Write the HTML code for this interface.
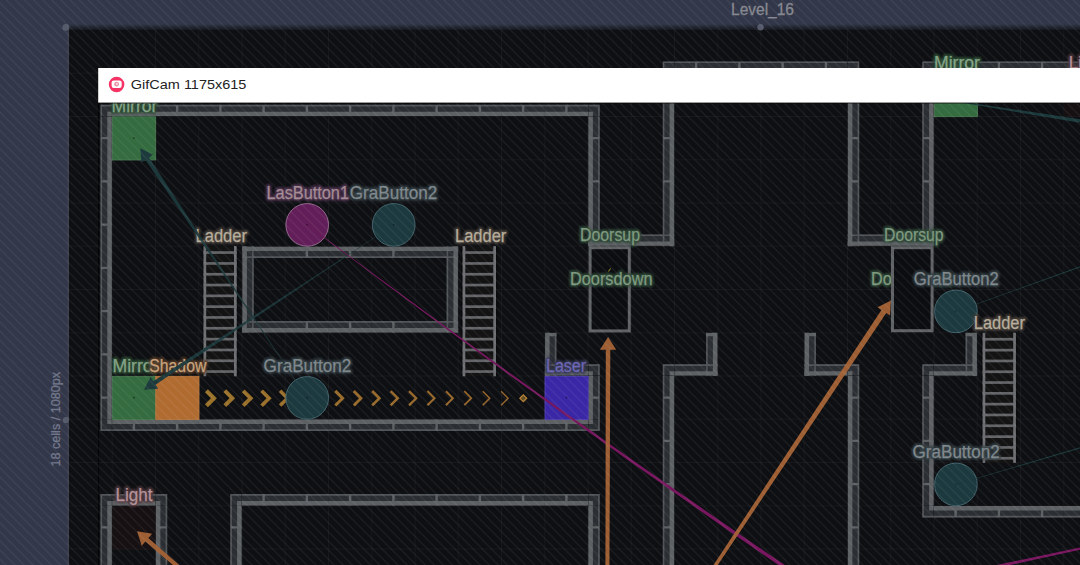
<!DOCTYPE html>
<html lang="en"><head><meta charset="utf-8"><title>Level_16</title>
<style>
html,body{margin:0;padding:0;background:#323749;overflow:hidden}
body{width:1080px;height:565px}
svg{display:block;font-family:"Liberation Sans",sans-serif}
</style></head><body>
<svg width="1080" height="565" viewBox="0 0 1080 565">
<defs>
<pattern id="stripes" width="9.12" height="9.12" patternUnits="userSpaceOnUse" patternTransform="translate(6.3 0)">
<path d="M-1 -1L10.12 10.12M-1 8.12L1 10.12M8.12 -1L10.12 1" stroke="#fff" stroke-opacity="0.082" stroke-width="0.92" fill="none"/>
</pattern>
<linearGradient id="tsh" x1="0" y1="0" x2="0" y2="1"><stop offset="0" stop-color="#000" stop-opacity="0"/><stop offset="1" stop-color="#000" stop-opacity="0.6"/></linearGradient>
<filter id="halo" x="-20%" y="-40%" width="140%" height="180%"><feGaussianBlur stdDeviation="0.8"/></filter>
</defs>
<rect width="1080" height="565" fill="#323749"/>
<rect x="68.0" y="24.0" width="1080" height="6" fill="url(#tsh)"/>
<rect x="67.4" y="29.0" width="2" height="565" fill="#3c404c"/>
<rect x="69.0" y="30.0" width="1080" height="565" fill="#0e0f12"/>
<path d="M112.2 30.0V565M155.5 30.0V565M198.8 30.0V565M242.0 30.0V565M285.2 30.0V565M328.5 30.0V565M371.8 30.0V565M415.0 30.0V565M458.2 30.0V565M501.5 30.0V565M544.8 30.0V565M588.0 30.0V565M631.2 30.0V565M674.5 30.0V565M717.8 30.0V565M761.0 30.0V565M804.2 30.0V565M847.5 30.0V565M890.8 30.0V565M934.0 30.0V565M977.2 30.0V565M1020.5 30.0V565M1063.8 30.0V565M69.0 73.2H1080M69.0 116.5H1080M69.0 159.8H1080M69.0 203.0H1080M69.0 246.2H1080M69.0 289.5H1080M69.0 332.8H1080M69.0 376.0H1080M69.0 419.2H1080M69.0 462.5H1080M69.0 505.8H1080M69.0 549.0H1080" stroke="#16181c" stroke-width="1" fill="none"/>
<g id="walls" shape-rendering="auto">
<path d="M662.8 61.5h11.3v11.3h-11.3zM674.5 61.5h43.2v11.3h-43.2zM717.8 61.5h43.2v11.3h-43.2zM761.0 61.5h43.2v11.3h-43.2zM804.2 61.5h43.2v11.3h-43.2zM847.9 61.5h11.3v11.3h-11.3zM922.3 61.5h11.3v11.3h-11.3zM934.0 61.5h43.2v11.3h-43.2zM977.2 61.5h43.2v11.3h-43.2zM1020.5 61.5h43.2v11.3h-43.2zM1063.8 61.5h43.2v11.3h-43.2zM100.5 104.8h11.3v11.3h-11.3zM112.2 104.8h43.2v11.3h-43.2zM155.5 104.8h43.2v11.3h-43.2zM198.8 104.8h43.2v11.3h-43.2zM242.0 104.8h43.2v11.3h-43.2zM285.2 104.8h43.2v11.3h-43.2zM328.5 104.8h43.2v11.3h-43.2zM371.8 104.8h43.2v11.3h-43.2zM415.0 104.8h43.2v11.3h-43.2zM458.2 104.8h43.2v11.3h-43.2zM501.5 104.8h43.2v11.3h-43.2zM544.8 104.8h43.2v11.3h-43.2zM588.4 104.8h11.3v11.3h-11.3zM662.8 73.2h11.3v43.2h-11.3zM847.9 73.2h11.3v43.2h-11.3zM922.3 73.2h11.3v43.2h-11.3zM100.5 116.5h11.3v43.2h-11.3zM588.4 116.5h11.3v43.2h-11.3zM662.8 116.5h11.3v43.2h-11.3zM847.9 116.5h11.3v43.2h-11.3zM922.3 116.5h11.3v43.2h-11.3zM100.5 159.8h11.3v43.2h-11.3zM588.4 159.8h11.3v43.2h-11.3zM662.8 159.8h11.3v43.2h-11.3zM847.9 159.8h11.3v43.2h-11.3zM922.3 159.8h11.3v43.2h-11.3zM100.5 203.0h11.3v43.2h-11.3zM588.0 234.5h43.2v11.3h-43.2zM588.4 203.0h11.3v43.2h-11.3zM631.2 234.5h43.2v11.3h-43.2zM662.8 203.0h11.3v43.2h-11.3zM847.5 234.5h43.2v11.3h-43.2zM847.9 203.0h11.3v43.2h-11.3zM890.8 234.5h43.2v11.3h-43.2zM922.3 203.0h11.3v43.2h-11.3zM100.5 246.2h11.3v43.2h-11.3zM242.0 246.7h43.2v11.3h-43.2zM242.4 246.2h11.3v43.2h-11.3zM285.2 246.7h43.2v11.3h-43.2zM328.5 246.7h43.2v11.3h-43.2zM371.8 246.7h43.2v11.3h-43.2zM415.0 246.7h43.2v11.3h-43.2zM446.6 246.2h11.3v43.2h-11.3zM100.5 289.5h11.3v43.2h-11.3zM242.0 321.1h43.2v11.3h-43.2zM242.4 289.5h11.3v43.2h-11.3zM285.2 321.1h43.2v11.3h-43.2zM328.5 321.1h43.2v11.3h-43.2zM371.8 321.1h43.2v11.3h-43.2zM415.0 321.1h43.2v11.3h-43.2zM446.6 289.5h11.3v43.2h-11.3zM100.5 332.8h11.3v43.2h-11.3zM544.8 364.3h43.2v11.3h-43.2zM545.1 332.8h11.3v43.2h-11.3zM588.4 364.3h11.3v11.3h-11.3zM662.8 364.3h11.3v11.3h-11.3zM674.5 364.3h43.2v11.3h-43.2zM706.1 332.8h11.3v43.2h-11.3zM804.2 364.3h43.2v11.3h-43.2zM804.6 332.8h11.3v43.2h-11.3zM847.9 364.3h11.3v11.3h-11.3zM922.3 364.3h11.3v11.3h-11.3zM934.0 364.3h43.2v11.3h-43.2zM965.6 332.8h11.3v43.2h-11.3zM100.5 376.0h11.3v43.2h-11.3zM588.4 376.0h11.3v43.2h-11.3zM662.8 376.0h11.3v43.2h-11.3zM847.9 376.0h11.3v43.2h-11.3zM922.3 376.0h11.3v43.2h-11.3zM100.5 419.6h11.3v11.3h-11.3zM112.2 419.6h43.2v11.3h-43.2zM155.5 419.6h43.2v11.3h-43.2zM198.8 419.6h43.2v11.3h-43.2zM242.0 419.6h43.2v11.3h-43.2zM285.2 419.6h43.2v11.3h-43.2zM328.5 419.6h43.2v11.3h-43.2zM371.8 419.6h43.2v11.3h-43.2zM415.0 419.6h43.2v11.3h-43.2zM458.2 419.6h43.2v11.3h-43.2zM501.5 419.6h43.2v11.3h-43.2zM544.8 419.6h43.2v11.3h-43.2zM588.4 419.6h11.3v11.3h-11.3zM662.8 419.2h11.3v43.2h-11.3zM847.9 419.2h11.3v43.2h-11.3zM922.3 419.2h11.3v43.2h-11.3zM100.5 494.1h11.3v11.3h-11.3zM112.2 494.1h43.2v11.3h-43.2zM155.9 494.1h11.3v11.3h-11.3zM230.3 494.1h11.3v11.3h-11.3zM242.0 494.1h43.2v11.3h-43.2zM285.2 494.1h43.2v11.3h-43.2zM328.5 494.1h43.2v11.3h-43.2zM371.8 494.1h43.2v11.3h-43.2zM415.0 494.1h43.2v11.3h-43.2zM458.2 494.1h43.2v11.3h-43.2zM501.5 494.1h43.2v11.3h-43.2zM544.8 494.1h43.2v11.3h-43.2zM588.4 494.1h11.3v11.3h-11.3zM662.8 462.5h11.3v43.2h-11.3zM847.9 462.5h11.3v43.2h-11.3zM922.3 462.5h11.3v43.2h-11.3zM100.5 505.8h11.3v43.2h-11.3zM155.9 505.8h11.3v43.2h-11.3zM230.3 505.8h11.3v43.2h-11.3zM588.4 505.8h11.3v43.2h-11.3zM662.8 505.8h11.3v43.2h-11.3zM847.9 505.8h11.3v43.2h-11.3zM922.3 506.1h11.3v11.3h-11.3zM934.0 506.1h43.2v11.3h-43.2zM977.2 506.1h43.2v11.3h-43.2zM1020.5 506.1h43.2v11.3h-43.2zM1063.8 506.1h43.2v11.3h-43.2zM100.5 549.0h11.3v43.2h-11.3zM155.9 549.0h11.3v43.2h-11.3zM230.3 549.0h11.3v43.2h-11.3zM588.4 549.0h11.3v43.2h-11.3zM662.8 549.0h11.3v43.2h-11.3zM847.9 549.0h11.3v43.2h-11.3zM100.5 592.2h11.3v43.2h-11.3zM155.9 592.2h11.3v43.2h-11.3zM230.3 592.2h11.3v43.2h-11.3zM588.4 592.2h11.3v43.2h-11.3zM662.8 592.2h11.3v43.2h-11.3zM847.9 592.2h11.3v43.2h-11.3z" fill="#2b2e32"/>
<path d="M662.8 61.5h1.6v11.3h-1.6zM662.8 61.5h11.3v1.6h-11.3zM674.5 61.5h43.2v1.6h-43.2zM717.8 61.5h43.2v1.6h-43.2zM761.0 61.5h43.2v1.6h-43.2zM804.2 61.5h43.2v1.6h-43.2zM857.6 61.5h1.6v11.3h-1.6zM847.9 61.5h11.3v1.6h-11.3zM922.3 61.5h1.6v11.3h-1.6zM922.3 61.5h11.3v1.6h-11.3zM934.0 61.5h43.2v1.6h-43.2zM977.2 61.5h43.2v1.6h-43.2zM1020.5 61.5h43.2v1.6h-43.2zM1063.8 61.5h43.2v1.6h-43.2zM100.5 104.8h1.6v11.3h-1.6zM100.5 104.8h11.3v1.6h-11.3zM112.2 104.8h43.2v1.6h-43.2zM155.5 104.8h43.2v1.6h-43.2zM198.8 104.8h43.2v1.6h-43.2zM242.0 104.8h43.2v1.6h-43.2zM285.2 104.8h43.2v1.6h-43.2zM328.5 104.8h43.2v1.6h-43.2zM371.8 104.8h43.2v1.6h-43.2zM415.0 104.8h43.2v1.6h-43.2zM458.2 104.8h43.2v1.6h-43.2zM501.5 104.8h43.2v1.6h-43.2zM544.8 104.8h43.2v1.6h-43.2zM598.1 104.8h1.6v11.3h-1.6zM588.4 104.8h11.3v1.6h-11.3zM662.8 73.2h1.6v43.2h-1.6zM857.6 73.2h1.6v43.2h-1.6zM922.3 73.2h1.6v43.2h-1.6zM100.5 116.5h1.6v43.2h-1.6zM598.1 116.5h1.6v43.2h-1.6zM662.8 116.5h1.6v43.2h-1.6zM857.6 116.5h1.6v43.2h-1.6zM922.3 116.5h1.6v43.2h-1.6zM100.5 159.8h1.6v43.2h-1.6zM598.1 159.8h1.6v43.2h-1.6zM662.8 159.8h1.6v43.2h-1.6zM857.6 159.8h1.6v43.2h-1.6zM922.3 159.8h1.6v43.2h-1.6zM100.5 203.0h1.6v43.2h-1.6zM588.0 234.5h43.2v1.6h-43.2zM598.1 203.0h1.6v43.2h-1.6zM631.2 234.5h43.2v1.6h-43.2zM662.8 203.0h1.6v43.2h-1.6zM847.5 234.5h43.2v1.6h-43.2zM857.6 203.0h1.6v43.2h-1.6zM890.8 234.5h43.2v1.6h-43.2zM922.3 203.0h1.6v43.2h-1.6zM100.5 246.2h1.6v43.2h-1.6zM242.0 256.3h43.2v1.6h-43.2zM252.1 246.2h1.6v43.2h-1.6zM285.2 256.3h43.2v1.6h-43.2zM328.5 256.3h43.2v1.6h-43.2zM371.8 256.3h43.2v1.6h-43.2zM415.0 256.3h43.2v1.6h-43.2zM446.6 246.2h1.6v43.2h-1.6zM100.5 289.5h1.6v43.2h-1.6zM242.0 321.1h43.2v1.6h-43.2zM252.1 289.5h1.6v43.2h-1.6zM285.2 321.1h43.2v1.6h-43.2zM328.5 321.1h43.2v1.6h-43.2zM371.8 321.1h43.2v1.6h-43.2zM415.0 321.1h43.2v1.6h-43.2zM446.6 289.5h1.6v43.2h-1.6zM100.5 332.8h1.6v43.2h-1.6zM544.8 364.3h43.2v1.6h-43.2zM554.8 332.8h1.6v43.2h-1.6zM598.1 364.3h1.6v11.3h-1.6zM588.4 364.3h11.3v1.6h-11.3zM662.8 364.3h1.6v11.3h-1.6zM662.8 364.3h11.3v1.6h-11.3zM674.5 364.3h43.2v1.6h-43.2zM706.1 332.8h1.6v43.2h-1.6zM804.2 364.3h43.2v1.6h-43.2zM814.3 332.8h1.6v43.2h-1.6zM857.6 364.3h1.6v11.3h-1.6zM847.9 364.3h11.3v1.6h-11.3zM922.3 364.3h1.6v11.3h-1.6zM922.3 364.3h11.3v1.6h-11.3zM934.0 364.3h43.2v1.6h-43.2zM965.6 332.8h1.6v43.2h-1.6zM100.5 376.0h1.6v43.2h-1.6zM598.1 376.0h1.6v43.2h-1.6zM662.8 376.0h1.6v43.2h-1.6zM857.6 376.0h1.6v43.2h-1.6zM922.3 376.0h1.6v43.2h-1.6zM100.5 419.6h1.6v11.3h-1.6zM100.5 429.3h11.3v1.6h-11.3zM112.2 429.3h43.2v1.6h-43.2zM155.5 429.3h43.2v1.6h-43.2zM198.8 429.3h43.2v1.6h-43.2zM242.0 429.3h43.2v1.6h-43.2zM285.2 429.3h43.2v1.6h-43.2zM328.5 429.3h43.2v1.6h-43.2zM371.8 429.3h43.2v1.6h-43.2zM415.0 429.3h43.2v1.6h-43.2zM458.2 429.3h43.2v1.6h-43.2zM501.5 429.3h43.2v1.6h-43.2zM544.8 429.3h43.2v1.6h-43.2zM598.1 419.6h1.6v11.3h-1.6zM588.4 429.3h11.3v1.6h-11.3zM662.8 419.2h1.6v43.2h-1.6zM857.6 419.2h1.6v43.2h-1.6zM922.3 419.2h1.6v43.2h-1.6zM100.5 494.1h1.6v11.3h-1.6zM100.5 494.1h11.3v1.6h-11.3zM112.2 494.1h43.2v1.6h-43.2zM165.6 494.1h1.6v11.3h-1.6zM155.9 494.1h11.3v1.6h-11.3zM230.3 494.1h1.6v11.3h-1.6zM230.3 494.1h11.3v1.6h-11.3zM242.0 494.1h43.2v1.6h-43.2zM285.2 494.1h43.2v1.6h-43.2zM328.5 494.1h43.2v1.6h-43.2zM371.8 494.1h43.2v1.6h-43.2zM415.0 494.1h43.2v1.6h-43.2zM458.2 494.1h43.2v1.6h-43.2zM501.5 494.1h43.2v1.6h-43.2zM544.8 494.1h43.2v1.6h-43.2zM598.1 494.1h1.6v11.3h-1.6zM588.4 494.1h11.3v1.6h-11.3zM662.8 462.5h1.6v43.2h-1.6zM857.6 462.5h1.6v43.2h-1.6zM922.3 462.5h1.6v43.2h-1.6zM100.5 505.8h1.6v43.2h-1.6zM165.6 505.8h1.6v43.2h-1.6zM230.3 505.8h1.6v43.2h-1.6zM598.1 505.8h1.6v43.2h-1.6zM662.8 505.8h1.6v43.2h-1.6zM857.6 505.8h1.6v43.2h-1.6zM922.3 506.1h1.6v11.3h-1.6zM922.3 515.8h11.3v1.6h-11.3zM934.0 515.8h43.2v1.6h-43.2zM977.2 515.8h43.2v1.6h-43.2zM1020.5 515.8h43.2v1.6h-43.2zM1063.8 515.8h43.2v1.6h-43.2zM100.5 549.0h1.6v43.2h-1.6zM165.6 549.0h1.6v43.2h-1.6zM230.3 549.0h1.6v43.2h-1.6zM598.1 549.0h1.6v43.2h-1.6zM662.8 549.0h1.6v43.2h-1.6zM857.6 549.0h1.6v43.2h-1.6zM100.5 592.2h1.6v43.2h-1.6zM165.6 592.2h1.6v43.2h-1.6zM230.3 592.2h1.6v43.2h-1.6zM598.1 592.2h1.6v43.2h-1.6zM662.8 592.2h1.6v43.2h-1.6zM857.6 592.2h1.6v43.2h-1.6z" fill="#515458"/>
<path d="M694.9 62.0h2.4v10.8h-2.4zM738.2 62.0h2.4v10.8h-2.4zM781.4 62.0h2.4v10.8h-2.4zM824.7 62.0h2.4v10.8h-2.4zM954.4 62.0h2.4v10.8h-2.4zM997.7 62.0h2.4v10.8h-2.4zM1040.9 62.0h2.4v10.8h-2.4zM1084.2 62.0h2.4v10.8h-2.4zM132.7 105.3h2.4v10.8h-2.4zM175.9 105.3h2.4v10.8h-2.4zM219.2 105.3h2.4v10.8h-2.4zM262.4 105.3h2.4v10.8h-2.4zM305.7 105.3h2.4v10.8h-2.4zM348.9 105.3h2.4v10.8h-2.4zM392.2 105.3h2.4v10.8h-2.4zM435.4 105.3h2.4v10.8h-2.4zM478.7 105.3h2.4v10.8h-2.4zM521.9 105.3h2.4v10.8h-2.4zM565.2 105.3h2.4v10.8h-2.4zM663.3 93.7h10.8v2.4h-10.8zM847.9 93.7h10.8v2.4h-10.8zM922.8 93.7h10.8v2.4h-10.8zM101.0 136.9h10.8v2.4h-10.8zM588.4 136.9h10.8v2.4h-10.8zM663.3 136.9h10.8v2.4h-10.8zM847.9 136.9h10.8v2.4h-10.8zM922.8 136.9h10.8v2.4h-10.8zM101.0 180.2h10.8v2.4h-10.8zM588.4 180.2h10.8v2.4h-10.8zM663.3 180.2h10.8v2.4h-10.8zM847.9 180.2h10.8v2.4h-10.8zM922.8 180.2h10.8v2.4h-10.8zM101.0 223.4h10.8v2.4h-10.8zM101.0 266.7h10.8v2.4h-10.8zM305.7 246.7h2.4v10.8h-2.4zM348.9 246.7h2.4v10.8h-2.4zM392.2 246.7h2.4v10.8h-2.4zM101.0 309.9h10.8v2.4h-10.8zM305.7 321.6h2.4v10.8h-2.4zM348.9 321.6h2.4v10.8h-2.4zM392.2 321.6h2.4v10.8h-2.4zM101.0 353.2h10.8v2.4h-10.8zM101.0 396.4h10.8v2.4h-10.8zM588.4 396.4h10.8v2.4h-10.8zM663.3 396.4h10.8v2.4h-10.8zM847.9 396.4h10.8v2.4h-10.8zM922.8 396.4h10.8v2.4h-10.8zM132.7 419.6h2.4v10.8h-2.4zM175.9 419.6h2.4v10.8h-2.4zM219.2 419.6h2.4v10.8h-2.4zM262.4 419.6h2.4v10.8h-2.4zM305.7 419.6h2.4v10.8h-2.4zM348.9 419.6h2.4v10.8h-2.4zM392.2 419.6h2.4v10.8h-2.4zM435.4 419.6h2.4v10.8h-2.4zM478.7 419.6h2.4v10.8h-2.4zM521.9 419.6h2.4v10.8h-2.4zM565.2 419.6h2.4v10.8h-2.4zM663.3 439.7h10.8v2.4h-10.8zM847.9 439.7h10.8v2.4h-10.8zM922.8 439.7h10.8v2.4h-10.8zM132.7 494.6h2.4v10.8h-2.4zM262.4 494.6h2.4v10.8h-2.4zM305.7 494.6h2.4v10.8h-2.4zM348.9 494.6h2.4v10.8h-2.4zM392.2 494.6h2.4v10.8h-2.4zM435.4 494.6h2.4v10.8h-2.4zM478.7 494.6h2.4v10.8h-2.4zM521.9 494.6h2.4v10.8h-2.4zM565.2 494.6h2.4v10.8h-2.4zM663.3 482.9h10.8v2.4h-10.8zM847.9 482.9h10.8v2.4h-10.8zM922.8 482.9h10.8v2.4h-10.8zM101.0 526.2h10.8v2.4h-10.8zM155.9 526.2h10.8v2.4h-10.8zM230.8 526.2h10.8v2.4h-10.8zM588.4 526.2h10.8v2.4h-10.8zM663.3 526.2h10.8v2.4h-10.8zM847.9 526.2h10.8v2.4h-10.8zM954.4 506.1h2.4v10.8h-2.4zM997.7 506.1h2.4v10.8h-2.4zM1040.9 506.1h2.4v10.8h-2.4zM1084.2 506.1h2.4v10.8h-2.4zM101.0 569.4h10.8v2.4h-10.8zM155.9 569.4h10.8v2.4h-10.8zM230.8 569.4h10.8v2.4h-10.8zM588.4 569.4h10.8v2.4h-10.8zM663.3 569.4h10.8v2.4h-10.8zM847.9 569.4h10.8v2.4h-10.8zM101.0 612.7h10.8v2.4h-10.8zM155.9 612.7h10.8v2.4h-10.8zM230.8 612.7h10.8v2.4h-10.8zM588.4 612.7h10.8v2.4h-10.8zM663.3 612.7h10.8v2.4h-10.8zM847.9 612.7h10.8v2.4h-10.8z" fill="#5e6164"/>
<path d="M669.6 68.5h4.5v4.3h-4.5zM674.5 68.5h43.2v4.3h-43.2zM717.8 68.5h43.2v4.3h-43.2zM761.0 68.5h43.2v4.3h-43.2zM804.2 68.5h43.2v4.3h-43.2zM847.9 68.5h4.5v4.3h-4.5zM929.1 68.5h4.5v4.3h-4.5zM934.0 68.5h43.2v4.3h-43.2zM977.2 68.5h43.2v4.3h-43.2zM1020.5 68.5h43.2v4.3h-43.2zM1063.8 68.5h43.2v4.3h-43.2zM107.3 111.8h4.5v4.3h-4.5zM112.2 111.8h43.2v4.3h-43.2zM155.5 111.8h43.2v4.3h-43.2zM198.8 111.8h43.2v4.3h-43.2zM242.0 111.8h43.2v4.3h-43.2zM285.2 111.8h43.2v4.3h-43.2zM328.5 111.8h43.2v4.3h-43.2zM371.8 111.8h43.2v4.3h-43.2zM415.0 111.8h43.2v4.3h-43.2zM458.2 111.8h43.2v4.3h-43.2zM501.5 111.8h43.2v4.3h-43.2zM544.8 111.8h43.2v4.3h-43.2zM588.4 111.8h4.5v4.3h-4.5zM669.6 73.2h4.5v43.2h-4.5zM847.9 73.2h4.5v43.2h-4.5zM929.1 73.2h4.5v43.2h-4.5zM107.3 116.5h4.5v43.2h-4.5zM588.4 116.5h4.5v43.2h-4.5zM669.6 116.5h4.5v43.2h-4.5zM847.9 116.5h4.5v43.2h-4.5zM929.1 116.5h4.5v43.2h-4.5zM107.3 159.8h4.5v43.2h-4.5zM588.4 159.8h4.5v43.2h-4.5zM669.6 159.8h4.5v43.2h-4.5zM847.9 159.8h4.5v43.2h-4.5zM929.1 159.8h4.5v43.2h-4.5zM107.3 203.0h4.5v43.2h-4.5zM588.0 241.5h43.2v4.3h-43.2zM588.4 203.0h4.5v43.2h-4.5zM631.2 241.5h43.2v4.3h-43.2zM669.6 203.0h4.5v43.2h-4.5zM847.5 241.5h43.2v4.3h-43.2zM847.9 203.0h4.5v43.2h-4.5zM890.8 241.5h43.2v4.3h-43.2zM929.1 203.0h4.5v43.2h-4.5zM107.3 246.2h4.5v43.2h-4.5zM242.0 246.7h43.2v4.3h-43.2zM242.4 246.2h4.5v43.2h-4.5zM285.2 246.7h43.2v4.3h-43.2zM328.5 246.7h43.2v4.3h-43.2zM371.8 246.7h43.2v4.3h-43.2zM415.0 246.7h43.2v4.3h-43.2zM453.4 246.2h4.5v43.2h-4.5zM107.3 289.5h4.5v43.2h-4.5zM242.0 328.1h43.2v4.3h-43.2zM242.4 289.5h4.5v43.2h-4.5zM285.2 328.1h43.2v4.3h-43.2zM328.5 328.1h43.2v4.3h-43.2zM371.8 328.1h43.2v4.3h-43.2zM415.0 328.1h43.2v4.3h-43.2zM453.4 289.5h4.5v43.2h-4.5zM107.3 332.8h4.5v43.2h-4.5zM544.8 371.3h43.2v4.3h-43.2zM545.1 332.8h4.5v43.2h-4.5zM545.1 333.1h11.3v3.2h-11.3zM588.4 371.3h4.5v4.3h-4.5zM669.6 371.3h4.5v4.3h-4.5zM674.5 371.3h43.2v4.3h-43.2zM712.9 332.8h4.5v43.2h-4.5zM706.1 333.1h11.3v3.2h-11.3zM804.2 371.3h43.2v4.3h-43.2zM804.6 332.8h4.5v43.2h-4.5zM804.6 333.1h11.3v3.2h-11.3zM847.9 371.3h4.5v4.3h-4.5zM929.1 371.3h4.5v4.3h-4.5zM934.0 371.3h43.2v4.3h-43.2zM972.4 332.8h4.5v43.2h-4.5zM965.6 333.1h11.3v3.2h-11.3zM107.3 376.0h4.5v43.2h-4.5zM588.4 376.0h4.5v43.2h-4.5zM669.6 376.0h4.5v43.2h-4.5zM847.9 376.0h4.5v43.2h-4.5zM929.1 376.0h4.5v43.2h-4.5zM107.3 419.6h4.5v4.3h-4.5zM112.2 419.6h43.2v4.3h-43.2zM155.5 419.6h43.2v4.3h-43.2zM198.8 419.6h43.2v4.3h-43.2zM242.0 419.6h43.2v4.3h-43.2zM285.2 419.6h43.2v4.3h-43.2zM328.5 419.6h43.2v4.3h-43.2zM371.8 419.6h43.2v4.3h-43.2zM415.0 419.6h43.2v4.3h-43.2zM458.2 419.6h43.2v4.3h-43.2zM501.5 419.6h43.2v4.3h-43.2zM544.8 419.6h43.2v4.3h-43.2zM588.4 419.6h4.5v4.3h-4.5zM669.6 419.2h4.5v43.2h-4.5zM847.9 419.2h4.5v43.2h-4.5zM929.1 419.2h4.5v43.2h-4.5zM107.3 501.1h4.5v4.3h-4.5zM112.2 501.1h43.2v4.3h-43.2zM155.9 501.1h4.5v4.3h-4.5zM237.1 501.1h4.5v4.3h-4.5zM242.0 501.1h43.2v4.3h-43.2zM285.2 501.1h43.2v4.3h-43.2zM328.5 501.1h43.2v4.3h-43.2zM371.8 501.1h43.2v4.3h-43.2zM415.0 501.1h43.2v4.3h-43.2zM458.2 501.1h43.2v4.3h-43.2zM501.5 501.1h43.2v4.3h-43.2zM544.8 501.1h43.2v4.3h-43.2zM588.4 501.1h4.5v4.3h-4.5zM669.6 462.5h4.5v43.2h-4.5zM847.9 462.5h4.5v43.2h-4.5zM929.1 462.5h4.5v43.2h-4.5zM107.3 505.8h4.5v43.2h-4.5zM155.9 505.8h4.5v43.2h-4.5zM237.1 505.8h4.5v43.2h-4.5zM588.4 505.8h4.5v43.2h-4.5zM669.6 505.8h4.5v43.2h-4.5zM847.9 505.8h4.5v43.2h-4.5zM929.1 506.1h4.5v4.3h-4.5zM934.0 506.1h43.2v4.3h-43.2zM977.2 506.1h43.2v4.3h-43.2zM1020.5 506.1h43.2v4.3h-43.2zM1063.8 506.1h43.2v4.3h-43.2zM107.3 549.0h4.5v43.2h-4.5zM155.9 549.0h4.5v43.2h-4.5zM237.1 549.0h4.5v43.2h-4.5zM588.4 549.0h4.5v43.2h-4.5zM669.6 549.0h4.5v43.2h-4.5zM847.9 549.0h4.5v43.2h-4.5zM107.3 592.2h4.5v43.2h-4.5zM155.9 592.2h4.5v43.2h-4.5zM237.1 592.2h4.5v43.2h-4.5zM588.4 592.2h4.5v43.2h-4.5zM669.6 592.2h4.5v43.2h-4.5zM847.9 592.2h4.5v43.2h-4.5z" fill="#5e6164"/>
</g>
<rect x="202.0" y="246.1" width="36.2" height="130.2" fill="#0a0b0d"/>
<rect x="203.5" y="246.1" width="33.2" height="130.2" fill="#141314"/>
<rect x="203.5" y="251.2" width="33.2" height="2.7" fill="#626467"/>
<rect x="203.5" y="262.1" width="33.2" height="2.7" fill="#626467"/>
<rect x="203.5" y="272.9" width="33.2" height="2.7" fill="#626467"/>
<rect x="203.5" y="283.7" width="33.2" height="2.7" fill="#626467"/>
<rect x="203.5" y="294.5" width="33.2" height="2.7" fill="#626467"/>
<rect x="203.5" y="305.3" width="33.2" height="2.7" fill="#626467"/>
<rect x="203.5" y="316.1" width="33.2" height="2.7" fill="#626467"/>
<rect x="203.5" y="326.9" width="33.2" height="2.7" fill="#626467"/>
<rect x="203.5" y="337.8" width="33.2" height="2.7" fill="#626467"/>
<rect x="203.5" y="348.6" width="33.2" height="2.7" fill="#626467"/>
<rect x="203.5" y="359.4" width="33.2" height="2.7" fill="#626467"/>
<rect x="203.5" y="370.2" width="33.2" height="2.7" fill="#626467"/>
<rect x="203.5" y="246.1" width="2.7" height="130.2" fill="#6c6e71"/>
<rect x="234.0" y="246.1" width="2.7" height="130.2" fill="#6c6e71"/>
<rect x="461.1" y="246.1" width="36.4" height="130.2" fill="#0a0b0d"/>
<rect x="462.6" y="246.1" width="33.4" height="130.2" fill="#141314"/>
<rect x="462.6" y="251.2" width="33.4" height="2.7" fill="#626467"/>
<rect x="462.6" y="262.1" width="33.4" height="2.7" fill="#626467"/>
<rect x="462.6" y="272.9" width="33.4" height="2.7" fill="#626467"/>
<rect x="462.6" y="283.7" width="33.4" height="2.7" fill="#626467"/>
<rect x="462.6" y="294.5" width="33.4" height="2.7" fill="#626467"/>
<rect x="462.6" y="305.3" width="33.4" height="2.7" fill="#626467"/>
<rect x="462.6" y="316.1" width="33.4" height="2.7" fill="#626467"/>
<rect x="462.6" y="326.9" width="33.4" height="2.7" fill="#626467"/>
<rect x="462.6" y="337.8" width="33.4" height="2.7" fill="#626467"/>
<rect x="462.6" y="348.6" width="33.4" height="2.7" fill="#626467"/>
<rect x="462.6" y="359.4" width="33.4" height="2.7" fill="#626467"/>
<rect x="462.6" y="370.2" width="33.4" height="2.7" fill="#626467"/>
<rect x="462.6" y="246.1" width="2.7" height="130.2" fill="#6c6e71"/>
<rect x="493.3" y="246.1" width="2.7" height="130.2" fill="#6c6e71"/>
<rect x="981.1" y="332.8" width="36.3" height="130.1" fill="#0a0b0d"/>
<rect x="982.6" y="332.8" width="33.3" height="130.1" fill="#141314"/>
<rect x="982.6" y="337.9" width="33.3" height="2.7" fill="#626467"/>
<rect x="982.6" y="348.8" width="33.3" height="2.7" fill="#626467"/>
<rect x="982.6" y="359.6" width="33.3" height="2.7" fill="#626467"/>
<rect x="982.6" y="370.4" width="33.3" height="2.7" fill="#626467"/>
<rect x="982.6" y="381.2" width="33.3" height="2.7" fill="#626467"/>
<rect x="982.6" y="392.0" width="33.3" height="2.7" fill="#626467"/>
<rect x="982.6" y="402.8" width="33.3" height="2.7" fill="#626467"/>
<rect x="982.6" y="413.6" width="33.3" height="2.7" fill="#626467"/>
<rect x="982.6" y="424.4" width="33.3" height="2.7" fill="#626467"/>
<rect x="982.6" y="435.3" width="33.3" height="2.7" fill="#626467"/>
<rect x="982.6" y="446.1" width="33.3" height="2.7" fill="#626467"/>
<rect x="982.6" y="456.9" width="33.3" height="2.7" fill="#626467"/>
<rect x="982.6" y="332.8" width="2.7" height="130.1" fill="#6c6e71"/>
<rect x="1013.2" y="332.8" width="2.7" height="130.1" fill="#6c6e71"/>
<path d="M206.4 390.7L213.9 398.2L206.4 405.8" stroke="rgb(154,114,42)" stroke-width="4.20" fill="none" stroke-linejoin="miter"/>
<path d="M224.8 390.7L232.3 398.2L224.8 405.7" stroke="rgb(153,113,42)" stroke-width="4.03" fill="none" stroke-linejoin="miter"/>
<path d="M243.2 390.8L250.7 398.2L243.2 405.7" stroke="rgb(153,112,42)" stroke-width="3.85" fill="none" stroke-linejoin="miter"/>
<path d="M261.6 390.8L269.1 398.2L261.6 405.7" stroke="rgb(153,111,42)" stroke-width="3.68" fill="none" stroke-linejoin="miter"/>
<path d="M280.1 390.8L287.5 398.2L280.1 405.6" stroke="rgb(153,111,43)" stroke-width="3.50" fill="none" stroke-linejoin="miter"/>
<path d="M298.5 390.9L305.8 398.2L298.5 405.6" stroke="rgb(153,110,43)" stroke-width="3.33" fill="none" stroke-linejoin="miter"/>
<path d="M316.9 390.9L324.2 398.2L316.9 405.6" stroke="rgb(153,109,43)" stroke-width="3.15" fill="none" stroke-linejoin="miter"/>
<path d="M335.3 390.9L342.6 398.2L335.3 405.5" stroke="rgb(153,108,43)" stroke-width="2.98" fill="none" stroke-linejoin="miter"/>
<path d="M353.8 391.0L361.0 398.2L353.8 405.5" stroke="rgb(153,108,44)" stroke-width="2.80" fill="none" stroke-linejoin="miter"/>
<path d="M372.2 391.0L379.4 398.2L372.2 405.4" stroke="rgb(152,107,44)" stroke-width="2.62" fill="none" stroke-linejoin="miter"/>
<path d="M390.6 391.1L397.8 398.2L390.6 405.4" stroke="rgb(152,106,44)" stroke-width="2.45" fill="none" stroke-linejoin="miter"/>
<path d="M409.0 391.1L416.2 398.2L409.0 405.4" stroke="rgb(152,105,44)" stroke-width="2.28" fill="none" stroke-linejoin="miter"/>
<path d="M427.4 391.1L434.5 398.2L427.4 405.3" stroke="rgb(152,105,45)" stroke-width="2.10" fill="none" stroke-linejoin="miter"/>
<path d="M445.9 391.2L452.9 398.2L445.9 405.3" stroke="rgb(152,104,45)" stroke-width="1.93" fill="none" stroke-linejoin="miter"/>
<path d="M464.3 391.2L471.3 398.2L464.3 405.2" stroke="rgb(152,103,45)" stroke-width="1.75" fill="none" stroke-linejoin="miter"/>
<path d="M482.7 391.2L489.7 398.2L482.7 405.2" stroke="rgb(152,102,45)" stroke-width="1.58" fill="none" stroke-linejoin="miter"/>
<path d="M501.1 391.3L508.1 398.2L501.1 405.2" stroke="rgb(152,102,46)" stroke-width="1.40" fill="none" stroke-linejoin="miter"/>
<rect x="520.9" y="395.8" width="4.8" height="4.8" transform="rotate(45 523.3 398.2)" fill="#5a4a20" stroke="#b88034" stroke-width="1.3"/>
<rect x="112.5" y="116.8" width="43.2" height="43.2" fill="#346b3f" stroke="#4d7d55" stroke-width="0.8"/><circle cx="133.9" cy="138.1" r="0.9" fill="#0008"/>
<rect x="934.3" y="73.5" width="43.2" height="43.2" fill="#346b3f" stroke="#4d7d55" stroke-width="0.8"/><circle cx="955.6" cy="94.9" r="0.9" fill="#0008"/>
<rect x="112.5" y="376.3" width="43.2" height="43.2" fill="#346b3f" stroke="#4d7d55" stroke-width="0.8"/><circle cx="133.9" cy="397.6" r="0.9" fill="#0008"/>
<rect x="155.8" y="376.3" width="43.2" height="43.2" fill="#b06b31" stroke="#bf7d42" stroke-width="0.8"/>
<rect x="545.0" y="376.3" width="43.2" height="43.2" fill="#3a27a6" stroke="#5544b8" stroke-width="0.8"/><circle cx="566.4" cy="397.6" r="0.9" fill="#0008"/>
<rect x="112.5" y="506.1" width="43.25" height="43.25" fill="#2a1414" opacity="0.28"/>
<rect x="1064.0" y="73.5" width="43.25" height="43.25" fill="#2a1414" opacity="0.28"/>
<rect x="590.1" y="247.7" width="39.2" height="83.2" fill="#0c0d10" stroke="#5f6264" stroke-width="3"/>
<text x="871.0" y="285.0" textLength="82.0" lengthAdjust="spacingAndGlyphs" font-size="18" fill="#2d4838" stroke="#2d4838" stroke-width="4.2" stroke-linejoin="round" opacity="0.9" filter="url(#halo)">Doorsdown</text><text x="871.0" y="285.0" textLength="82.0" lengthAdjust="spacingAndGlyphs" font-size="18" fill="#7e997e" stroke="#7e997e" stroke-width="0.25">Doorsdown</text>
<rect x="892.5" y="247.7" width="39.6" height="83.0" fill="#0c0d10" stroke="#5f6264" stroke-width="3"/>
<circle cx="307.2" cy="224.9" r="21.3" fill="#621e58" stroke="#94688e" stroke-width="1"/><circle cx="307.2" cy="224.9" r="0.8" fill="#0007"/>
<circle cx="393.7" cy="224.9" r="21.3" fill="#1b393e" stroke="#41626a" stroke-width="1"/><circle cx="393.7" cy="224.9" r="0.8" fill="#0007"/>
<circle cx="307.2" cy="397.9" r="21.3" fill="#1b393e" stroke="#41626a" stroke-width="1"/><circle cx="307.2" cy="397.9" r="0.8" fill="#0007"/>
<circle cx="955.9" cy="311.4" r="21.3" fill="#1b393e" stroke="#41626a" stroke-width="1"/><circle cx="955.9" cy="311.4" r="0.8" fill="#0007"/>
<circle cx="955.9" cy="484.4" r="21.3" fill="#1b393e" stroke="#41626a" stroke-width="1"/><circle cx="955.9" cy="484.4" r="0.8" fill="#0007"/>
<text x="111.5" y="111.5" textLength="46.0" lengthAdjust="spacingAndGlyphs" font-size="18" fill="#294b33" stroke="#294b33" stroke-width="4.2" stroke-linejoin="round" opacity="0.9" filter="url(#halo)">Mirror</text><text x="111.5" y="111.5" textLength="46.0" lengthAdjust="spacingAndGlyphs" font-size="18" fill="#83a285" stroke="#83a285" stroke-width="0.25">Mirror</text>
<text x="934.0" y="68.8" textLength="46.0" lengthAdjust="spacingAndGlyphs" font-size="18" fill="#294b33" stroke="#294b33" stroke-width="4.2" stroke-linejoin="round" opacity="0.9" filter="url(#halo)">Mirror</text><text x="934.0" y="68.8" textLength="46.0" lengthAdjust="spacingAndGlyphs" font-size="18" fill="#83a285" stroke="#83a285" stroke-width="0.25">Mirror</text>
<text x="112.5" y="371.8" textLength="46.0" lengthAdjust="spacingAndGlyphs" font-size="18" fill="#294b33" stroke="#294b33" stroke-width="4.2" stroke-linejoin="round" opacity="0.9" filter="url(#halo)">Mirror</text><text x="112.5" y="371.8" textLength="46.0" lengthAdjust="spacingAndGlyphs" font-size="18" fill="#83a285" stroke="#83a285" stroke-width="0.25">Mirror</text>
<text x="149.3" y="371.8" textLength="57.0" lengthAdjust="spacingAndGlyphs" font-size="18" fill="#513828" stroke="#513828" stroke-width="4.2" stroke-linejoin="round" opacity="0.9" filter="url(#halo)">Shadow</text><text x="149.3" y="371.8" textLength="57.0" lengthAdjust="spacingAndGlyphs" font-size="18" fill="#c7a37c" stroke="#c7a37c" stroke-width="0.25">Shadow</text>
<text x="266.5" y="198.8" textLength="82.5" lengthAdjust="spacingAndGlyphs" font-size="18" fill="#503452" stroke="#503452" stroke-width="4.2" stroke-linejoin="round" opacity="0.9" filter="url(#halo)">LasButton1</text><text x="266.5" y="198.8" textLength="82.5" lengthAdjust="spacingAndGlyphs" font-size="18" fill="#a58a92" stroke="#a58a92" stroke-width="0.25">LasButton1</text>
<text x="349.8" y="198.8" textLength="87.6" lengthAdjust="spacingAndGlyphs" font-size="18" fill="#333e43" stroke="#333e43" stroke-width="4.2" stroke-linejoin="round" opacity="0.9" filter="url(#halo)">GraButton2</text><text x="349.8" y="198.8" textLength="87.6" lengthAdjust="spacingAndGlyphs" font-size="18" fill="#7e878b" stroke="#7e878b" stroke-width="0.25">GraButton2</text>
<text x="263.6" y="372.0" textLength="87.7" lengthAdjust="spacingAndGlyphs" font-size="18" fill="#333e43" stroke="#333e43" stroke-width="4.2" stroke-linejoin="round" opacity="0.9" filter="url(#halo)">GraButton2</text><text x="263.6" y="372.0" textLength="87.7" lengthAdjust="spacingAndGlyphs" font-size="18" fill="#7e878b" stroke="#7e878b" stroke-width="0.25">GraButton2</text>
<text x="195.5" y="241.6" textLength="51.5" lengthAdjust="spacingAndGlyphs" font-size="18" fill="#47403a" stroke="#47403a" stroke-width="4.2" stroke-linejoin="round" opacity="0.9" filter="url(#halo)">Ladder</text><text x="195.5" y="241.6" textLength="51.5" lengthAdjust="spacingAndGlyphs" font-size="18" fill="#b6ac9a" stroke="#b6ac9a" stroke-width="0.25">Ladder</text>
<text x="455.0" y="241.6" textLength="51.3" lengthAdjust="spacingAndGlyphs" font-size="18" fill="#47403a" stroke="#47403a" stroke-width="4.2" stroke-linejoin="round" opacity="0.9" filter="url(#halo)">Ladder</text><text x="455.0" y="241.6" textLength="51.3" lengthAdjust="spacingAndGlyphs" font-size="18" fill="#b6ac9a" stroke="#b6ac9a" stroke-width="0.25">Ladder</text>
<text x="973.8" y="329.2" textLength="51.2" lengthAdjust="spacingAndGlyphs" font-size="18" fill="#47403a" stroke="#47403a" stroke-width="4.2" stroke-linejoin="round" opacity="0.9" filter="url(#halo)">Ladder</text><text x="973.8" y="329.2" textLength="51.2" lengthAdjust="spacingAndGlyphs" font-size="18" fill="#b6ac9a" stroke="#b6ac9a" stroke-width="0.25">Ladder</text>
<text x="580.0" y="241.0" textLength="60.0" lengthAdjust="spacingAndGlyphs" font-size="18" fill="#2d4838" stroke="#2d4838" stroke-width="4.2" stroke-linejoin="round" opacity="0.9" filter="url(#halo)">Doorsup</text><text x="580.0" y="241.0" textLength="60.0" lengthAdjust="spacingAndGlyphs" font-size="18" fill="#7e997e" stroke="#7e997e" stroke-width="0.25">Doorsup</text>
<text x="570.0" y="285.0" textLength="82.5" lengthAdjust="spacingAndGlyphs" font-size="18" fill="#2d4838" stroke="#2d4838" stroke-width="4.2" stroke-linejoin="round" opacity="0.9" filter="url(#halo)">Doorsdown</text><text x="570.0" y="285.0" textLength="82.5" lengthAdjust="spacingAndGlyphs" font-size="18" fill="#7e997e" stroke="#7e997e" stroke-width="0.25">Doorsdown</text>
<text x="884.0" y="241.0" textLength="59.6" lengthAdjust="spacingAndGlyphs" font-size="18" fill="#2d4838" stroke="#2d4838" stroke-width="4.2" stroke-linejoin="round" opacity="0.9" filter="url(#halo)">Doorsup</text><text x="884.0" y="241.0" textLength="59.6" lengthAdjust="spacingAndGlyphs" font-size="18" fill="#7e997e" stroke="#7e997e" stroke-width="0.25">Doorsup</text>
<text x="913.8" y="285.0" textLength="85.0" lengthAdjust="spacingAndGlyphs" font-size="18" fill="#333e43" stroke="#333e43" stroke-width="4.2" stroke-linejoin="round" opacity="0.9" filter="url(#halo)">GraButton2</text><text x="913.8" y="285.0" textLength="85.0" lengthAdjust="spacingAndGlyphs" font-size="18" fill="#7e878b" stroke="#7e878b" stroke-width="0.25">GraButton2</text>
<text x="912.6" y="458.2" textLength="87.2" lengthAdjust="spacingAndGlyphs" font-size="18" fill="#333e43" stroke="#333e43" stroke-width="4.2" stroke-linejoin="round" opacity="0.9" filter="url(#halo)">GraButton2</text><text x="912.6" y="458.2" textLength="87.2" lengthAdjust="spacingAndGlyphs" font-size="18" fill="#7e878b" stroke="#7e878b" stroke-width="0.25">GraButton2</text>
<text x="546.0" y="372.0" textLength="40.0" lengthAdjust="spacingAndGlyphs" font-size="18" fill="#333651" stroke="#333651" stroke-width="4.2" stroke-linejoin="round" opacity="0.9" filter="url(#halo)">Laser</text><text x="546.0" y="372.0" textLength="40.0" lengthAdjust="spacingAndGlyphs" font-size="18" fill="#6c64b4" stroke="#6c64b4" stroke-width="0.25">Laser</text>
<text x="115.6" y="501.4" textLength="37.0" lengthAdjust="spacingAndGlyphs" font-size="18" fill="#4e383e" stroke="#4e383e" stroke-width="4.2" stroke-linejoin="round" opacity="0.9" filter="url(#halo)">Light</text><text x="115.6" y="501.4" textLength="37.0" lengthAdjust="spacingAndGlyphs" font-size="18" fill="#b49097" stroke="#b49097" stroke-width="0.25">Light</text>
<text x="1068.8" y="68.8" textLength="37.0" lengthAdjust="spacingAndGlyphs" font-size="18" fill="#4e383e" stroke="#4e383e" stroke-width="4.2" stroke-linejoin="round" opacity="0.9" filter="url(#halo)">Light</text><text x="1068.8" y="68.8" textLength="37.0" lengthAdjust="spacingAndGlyphs" font-size="18" fill="#b49097" stroke="#b49097" stroke-width="0.25">Light</text>
<path d="M608.5 271.5l2 -3" stroke="#a89a30" stroke-width="1" fill="none"/>
<linearGradient id="ag1" gradientUnits="userSpaceOnUse" x1="307.2" y1="397.9" x2="140.3" y2="148.3"><stop offset="0" stop-color="#1c393c" stop-opacity="0.7"/><stop offset="1" stop-color="#1c393c" stop-opacity="1"/></linearGradient><polygon points="307.4,397.8 294.1,377.8 280.9,357.8 267.6,337.8 254.4,317.8 241.2,297.8 228.0,277.8 214.8,257.7 201.6,237.7 188.5,217.7 175.3,197.6 162.1,177.6 149.0,157.5 153.1,154.8 140.3,148.3 141.4,162.6 145.5,159.9 159.0,179.7 172.5,199.5 186.0,219.3 199.5,239.2 213.0,259.0 226.4,278.8 239.9,298.7 253.3,318.5 266.8,338.4 280.2,358.3 293.6,378.2 307.0,398.1" fill="url(#ag1)"/>
<linearGradient id="ag2" gradientUnits="userSpaceOnUse" x1="393.7" y1="224.9" x2="144.0" y2="389.8"><stop offset="0" stop-color="#1c393c" stop-opacity="0.7"/><stop offset="1" stop-color="#1c393c" stop-opacity="1"/></linearGradient><polygon points="393.5,224.7 373.6,237.8 353.6,250.9 333.6,264.0 313.6,277.0 293.6,290.1 273.5,303.1 253.5,316.1 233.5,329.2 213.4,342.2 193.4,355.2 173.3,368.2 153.3,381.2 150.6,377.1 144.0,389.8 158.3,388.8 155.6,384.7 175.4,371.3 195.2,358.0 215.1,344.7 234.9,331.3 254.7,318.0 274.6,304.7 294.4,291.4 314.3,278.1 334.1,264.9 354.0,251.6 373.9,238.3 393.8,225.1" fill="url(#ag2)"/>
<polygon points="307.0,225.1 317.0,232.6 327.0,240.2 337.0,247.7 346.9,255.1 356.9,262.6 366.9,270.1 376.9,277.5 386.9,284.9 396.9,292.3 406.8,299.7 416.8,307.1 426.8,314.5 436.8,321.8 446.8,329.2 456.7,336.5 466.7,343.8 476.7,351.1 486.7,358.4 496.7,365.7 506.6,372.9 516.6,380.2 526.6,387.4 536.6,394.6 546.6,401.8 556.5,409.0 566.5,416.2 576.5,423.3 586.5,430.5 596.5,437.6 606.5,444.7 616.4,451.8 626.4,458.9 636.4,466.0 646.4,473.0 656.4,480.1 666.4,487.1 676.3,494.1 686.3,501.1 696.3,508.1 706.3,515.1 716.3,522.0 726.2,529.0 736.2,535.9 746.2,542.8 756.2,549.7 766.2,556.6 776.2,563.5 786.1,570.3 796.1,577.2 806.1,584.0 816.1,590.8 826.1,597.6 836.1,604.4 846.0,611.2 856.0,618.0 866.0,624.7 876.0,631.4 886.0,638.2 896.0,644.9 905.9,651.6 915.9,658.2 925.9,664.9 928.4,661.1 918.4,654.5 908.4,647.8 898.4,641.2 888.4,634.6 878.4,627.9 868.3,621.2 858.3,614.5 848.3,607.8 838.3,601.1 828.3,594.4 818.3,587.6 808.2,580.9 798.2,574.1 788.2,567.3 778.2,560.5 768.2,553.7 758.2,546.9 748.1,540.0 738.1,533.2 728.1,526.3 718.1,519.4 708.1,512.5 698.1,505.6 688.0,498.6 678.0,491.7 668.0,484.7 658.0,477.8 648.0,470.8 637.9,463.8 627.9,456.8 617.9,449.7 607.9,442.7 597.9,435.6 587.9,428.5 577.8,421.5 567.8,414.4 557.8,407.2 547.8,400.1 537.8,393.0 527.7,385.8 517.7,378.6 507.7,371.5 497.7,364.2 487.7,357.0 477.7,349.8 467.6,342.6 457.6,335.3 447.6,328.0 437.6,320.7 427.6,313.4 417.5,306.1 407.5,298.8 397.5,291.5 387.5,284.1 377.5,276.7 367.4,269.3 357.4,261.9 347.4,254.5 337.4,247.1 327.4,239.7 317.3,232.2 307.3,224.7" fill="#78175f"/>
<polygon points="1299.9,501.5 919.6,581.1 920.4,584.5 1300.1,502.1" fill="#78175f" opacity="1"/>
<polygon points="956.0,311.7 1300.4,189.0 1299.6,187.0 955.8,311.2" fill="#1c393c" opacity="1"/>
<polygon points="956.0,484.7 1300.3,384.1 1299.7,381.9 955.9,484.2" fill="#1c393c" opacity="1"/>
<polygon points="945.9,100.0 1079.7,122.8 1080.3,119.2 946.1,99.2" fill="#1c393c" opacity="1"/>
<polygon points="608.7,760.0 610.3,349.8 616.2,349.8 608.1,337.1 599.9,349.8 605.8,349.8 605.1,760.0" fill="#a86436" opacity="0.93"/>
<polygon points="615.6,717.9 886.2,313.0 890.0,315.5 891.0,300.6 877.6,307.3 881.4,309.9 613.7,716.7" fill="#a86436" opacity="0.93"/>
<polygon points="288.8,661.0 148.4,538.0 152.1,533.8 137.1,531.2 141.7,545.7 145.4,541.4 287.0,663.0" fill="#a86436" opacity="0.93"/>
<text x="762.5" y="14.7" text-anchor="middle" font-size="17.4" fill="#868890" stroke="#868890" stroke-width="0.3" textLength="63" lengthAdjust="spacingAndGlyphs">Level_16</text>
<circle cx="760.5" cy="27.3" r="3.2" fill="#565b6b"/>
<circle cx="65.8" cy="27.3" r="3.4" fill="#565b6b"/>
<circle cx="65.9" cy="420" r="3.1" fill="#565b6b"/>
<text transform="translate(60.0 466.5) rotate(-90)" font-size="12.8" fill="#71768a" stroke="#71768a" stroke-width="0.3" textLength="94.5" lengthAdjust="spacingAndGlyphs">18 cells / 1080px</text>
<rect x="98" y="102" width="1.1" height="463" fill="#050506"/>
<rect width="1080" height="565" fill="url(#stripes)"/>
<rect x="98" y="101.6" width="982" height="1.8" fill="#050506"/>
<rect x="98.2" y="68" width="981.8" height="34.6" fill="#ffffff"/>
<circle cx="116.6" cy="84.4" r="7.75" fill="#f53264"/>
<rect x="111.6" y="80.4" width="10.1" height="7.5" rx="2.2" fill="#fff"/><circle cx="116.6" cy="84.2" r="2.4" fill="#e994a9"/><circle cx="116.9" cy="84.0" r="0.9" fill="#fbe4ea"/>
<text x="130.8" y="89.2" font-size="13.5" fill="#222" textLength="115.6" lengthAdjust="spacingAndGlyphs">GifCam 1175x615</text>
</svg>
</body></html>
